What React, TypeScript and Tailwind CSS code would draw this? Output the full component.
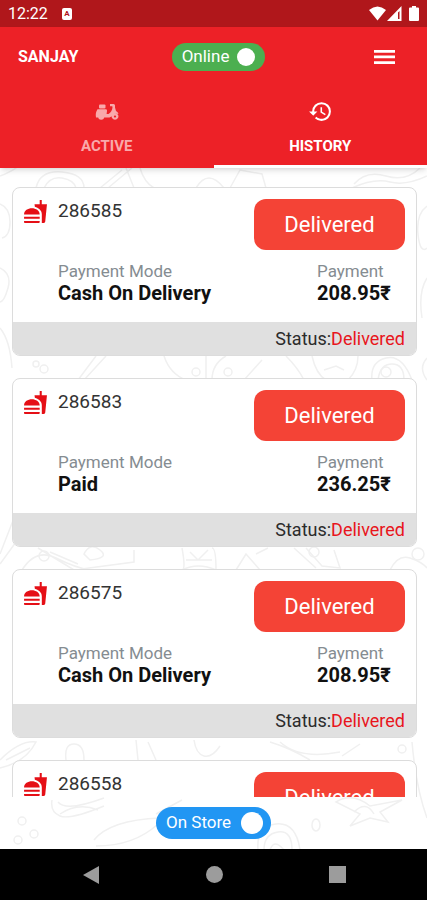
import { useState } from 'react';
import { MdFastfood, MdHistory } from 'react-icons/md';

type Order = {
  id: string;
  mode: string;
  amount: string;
  status: string;
};

const orders: Order[] = [
  { id: '286585', mode: 'Cash On Delivery', amount: '208.95₹', status: 'Delivered' },
  { id: '286583', mode: 'Paid', amount: '236.25₹', status: 'Delivered' },
  { id: '286575', mode: 'Cash On Delivery', amount: '208.95₹', status: 'Delivered' },
  { id: '286558', mode: 'Cash On Delivery', amount: '208.95₹', status: 'Delivered' },
];

function ScooterIcon() {
  return (
    <svg width="24" height="18" viewBox="0 0 24 18" fill="currentColor" aria-hidden="true">
      <rect x="4" y="1.500" width="6.500" height="4" rx="1" />
      <path d="M2.500 6.300H11Q12.300 6.300 12 8L11.600 11H13.500Q17 8.500 17.500 4.500L17.300 3.200H15V1H18.500Q20 1 20 2.500V4.500L21 8Q23 8.800 23.500 11L20 10.500Q17 14 14.500 14.500H1Q0 10 2.500 6.300Z" />
      <circle cx="6.200" cy="13.800" r="3" />
      <path fillRule="evenodd" d="M20 10a3.400 3.400 0 1 0 .01 0ZM20 12.400a1 1 0 1 1-.01 0Z" />
    </svg>
  );
}

// Faint food sketches behind the list
function FoodPattern() {
  return (
    <svg
      className="absolute inset-0 h-full w-full text-[#f0f0f0]"
      viewBox="0 0 427 682"
      preserveAspectRatio="xMidYMin slice"
      fill="none"
      stroke="currentColor"
      strokeWidth="1.500"
      aria-hidden="true"
    >
      <path d="M0 8Q16 2 20 -4M36 20Q40 2 62 4T84 20M44 20Q50 8 62 10T76 20M100 20L122 2M108 20L132 0M126 0L134 20M140 0Q144 14 154 20M196 20Q208 0 224 20M230 20L240 2L262 6L266 20M354 16Q366 2 386 8T420 0M352 20Q374 10 390 14T427 8" />
      <path d="M0 36Q10 40 10 54T2 70M0 100Q12 106 8 120T0 134M0 160Q10 172 12 200M427 38Q416 46 418 66T427 80M427 110Q418 124 422 150M427 190Q418 200 427 212" />
      <circle cx="36" cy="196" r="3" />
      <circle cx="44" cy="201" r="4" />
      <path d="M78 212L96 188M84 212L106 188M164 188Q170 206 186 212M206 188V212M212 212Q212 196 226 188M244 212L262 192M286 188Q298 200 304 212M312 188Q316 206 326 212H348Q358 202 358 188M324 202L336 198L344 202M372 212Q370 194 386 190T412 212M378 212Q380 196 392 196T404 212" />
      <circle cx="196" cy="204" r="4" />
      <circle cx="228" cy="204" r="4" />
      <circle cx="386" cy="204" r="5" />
      <path d="M0 386L14 350M0 396L16 374M22 402Q36 380 56 390T90 402M38 380L74 402L134 394V382M50 384L78 396M84 386Q90 374 100 382T90 392ZM182 380Q186 402 182 402Q198 394 216 402Q216 380 212 380M190 384L198 392L208 382M186 392H212M236 402L246 386L260 402M256 386L268 380M294 380L316 400M306 380L322 398L340 400L334 382M390 402Q398 386 410 390T427 400" />
      <circle cx="44" cy="388" r="5" />
      <circle cx="314" cy="384" r="5" />
      <circle cx="418" cy="386" r="6" />
      <path d="M0 592Q20 572 36 574Q26 594 0 600M6 592L30 580M66 592Q64 576 74 576T84 592M138 592L136 572M148 574L156 592M194 572Q196 586 204 588T220 578M270 574Q290 580 310 592M280 574Q300 592 340 584M342 588L360 576M412 574Q416 620 427 650" />
      <circle cx="402" cy="581" r="4" />
      <path d="M52 632Q50 644 60 648T104 638M58 634Q66 644 104 630M60 646Q78 634 98 642M94 672Q110 652 160 650M96 678Q134 678 158 656M156 646L182 632M336 634Q352 624 370 638L402 632L380 644L388 654L370 650L350 658L360 646ZM354 644Q366 632 374 646" />
      <circle cx="22" cy="653" r="4" />
      <circle cx="34" cy="666" r="4" />
      <circle cx="18" cy="672" r="4" />
      <path d="M258 682Q256 658 276 656T300 682M264 682Q264 666 278 664T292 682M270 682Q274 670 284 682" />
      <ellipse cx="316" cy="657" rx="4" ry="6" />
    </svg>
  );
}

function StatusBar() {
  return (
    <div className="flex h-[27px] shrink-0 items-center bg-[#b0171b] px-2 text-white">
      <span className="text-base">12:22</span>
      <span className="ml-3.5 flex h-3 w-2.5 items-center justify-center rounded-xs bg-white text-[8px] font-bold text-[#b0171b]">
        A
      </span>
      <div className="ml-auto flex items-center gap-px">
        <svg width="17" height="15" viewBox="0 0 17 15" fill="currentColor" aria-hidden="true">
          <path d="M0 4Q8.500 -3 17 4L8.500 14.500Z" />
        </svg>
        <svg width="15" height="15" viewBox="0 0 15 15" aria-hidden="true">
          <path fill="currentColor" fillRule="evenodd" d="M14.500 0V15H0ZM12.500 5L11 6.500V13H12.500Z" />
        </svg>
        <svg className="ml-1.5" width="10" height="15" viewBox="0 0 10 15" fill="currentColor" aria-hidden="true">
          <path d="M3 0H7V1.500H9Q10 1.500 10 2.500V14Q10 15 9 15H1Q0 15 0 14V2.500Q0 1.500 1 1.500H3Z" />
        </svg>
      </div>
    </div>
  );
}

function OrderCard({ order }: { order: Order }) {
  return (
    <article className="shrink-0 overflow-hidden rounded-lg border border-[#dcdcdc] bg-white">
      <div className="flex h-[134px] pt-[11px] pr-[11px] pl-2.5">
        <MdFastfood size={25} className="shrink-0 text-[#e50f16]" />
        <div className="ml-2.5 flex flex-1 flex-col">
          <h2 className="text-[19px] leading-6 text-[#333333]">{order.id}</h2>
          <p className="mt-9 text-[17px] leading-6 text-[#858c91]">Payment Mode</p>
          <p className="text-xl leading-5 font-bold text-[#111111]">{order.mode}</p>
        </div>
        <div className="flex w-[151px] flex-col">
          <button
            type="button"
            className="h-[51px] shrink-0 rounded-xl bg-[#f44336] text-[22px] text-white"
          >
            {order.status}
          </button>
          <div className="mt-[9px] pl-[63px]">
            <p className="text-[17px] leading-6 text-[#858c91]">Payment</p>
            <p className="text-xl leading-5 font-bold text-[#111111]">{order.amount}</p>
          </div>
        </div>
      </div>
      <p className="bg-[#e0e0e0] pr-[11px] text-right text-lg leading-[33px] text-[#2b2b2b]">
        Status:<span className="text-[#e8151c]">{order.status}</span>
      </p>
    </article>
  );
}

export default function App() {
  const [online, setOnline] = useState(true);
  const [onStore, setOnStore] = useState(true);

  return (
    <div className="flex h-screen flex-col overflow-hidden bg-white font-['Roboto',sans-serif]">
      <StatusBar />

      <header className="z-10 shrink-0 bg-[#ed2127] text-white shadow-md">
        <div className="flex h-[60px] items-center justify-between pr-8 pl-[18px]">
          <h1 className="text-base font-bold">SANJAY</h1>
          <button
            type="button"
            role="switch"
            aria-checked={online}
            onClick={() => setOnline(!online)}
            className="ml-6 flex h-7 w-[93px] items-center justify-between rounded-full bg-[#4caf50] px-2.5 text-[17px]"
          >
            Online
            <span className="size-[18px] rounded-full bg-white" />
          </button>
          <button type="button" aria-label="Menu" className="ml-10">
            <svg width="21" height="14" viewBox="0 0 21 14" fill="currentColor">
              <path d="M0 0H21V2.700H0ZM0 5.600H21V8.300H0ZM0 11.300H21V14H0Z" />
            </svg>
          </button>
        </div>

        <nav className="grid grid-cols-2 text-[15px] leading-6 font-bold">
          <a href="#active" className="flex h-[81px] flex-col items-center border-b-3 border-transparent pt-3 text-[#f9a9ab]">
            <span className="flex h-[25px] items-center">
              <ScooterIcon />
            </span>
            <span className="mt-2.5">ACTIVE</span>
          </a>
          <a href="#history" aria-current="page" className="flex h-[81px] flex-col items-center border-b-3 border-white pt-3">
            <span className="flex h-[25px] items-center">
              <MdHistory size={25} />
            </span>
            <span className="mt-2.5">HISTORY</span>
          </a>
        </nav>
      </header>

      <div className="relative flex min-h-0 flex-1 flex-col">
        <FoodPattern />
        <main className="relative flex min-h-0 flex-1 flex-col gap-[22px] overflow-y-auto pt-[19px] pr-[10px] pl-3 [scrollbar-width:none]">
          {orders.map((order) => (
            <OrderCard key={order.id} order={order} />
          ))}
        </main>
        <div className="relative flex h-[52px] shrink-0 items-center justify-center">
          <button
            type="button"
            role="switch"
            aria-checked={onStore}
            onClick={() => setOnStore(!onStore)}
            className="flex h-8 w-[115px] items-center justify-between rounded-full bg-[#2196f3] pr-2 pl-2.5 text-[17px] text-white"
          >
            On Store
            <span className="size-[22px] rounded-full bg-white" />
          </button>
        </div>
      </div>

      <nav className="flex h-[51px] shrink-0 items-center justify-center gap-[106px] bg-black text-[#9c9c9c]">
        <button type="button" aria-label="Back">
          <svg width="18" height="20" viewBox="0 0 18 20" fill="currentColor">
            <path d="M17 1V19L1 10Z" />
          </svg>
        </button>
        <button type="button" aria-label="Home" className="size-[17px] rounded-full bg-[#9c9c9c]" />
        <button type="button" aria-label="Recents" className="size-[17px] bg-[#9c9c9c]" />
      </nav>
    </div>
  );
}
